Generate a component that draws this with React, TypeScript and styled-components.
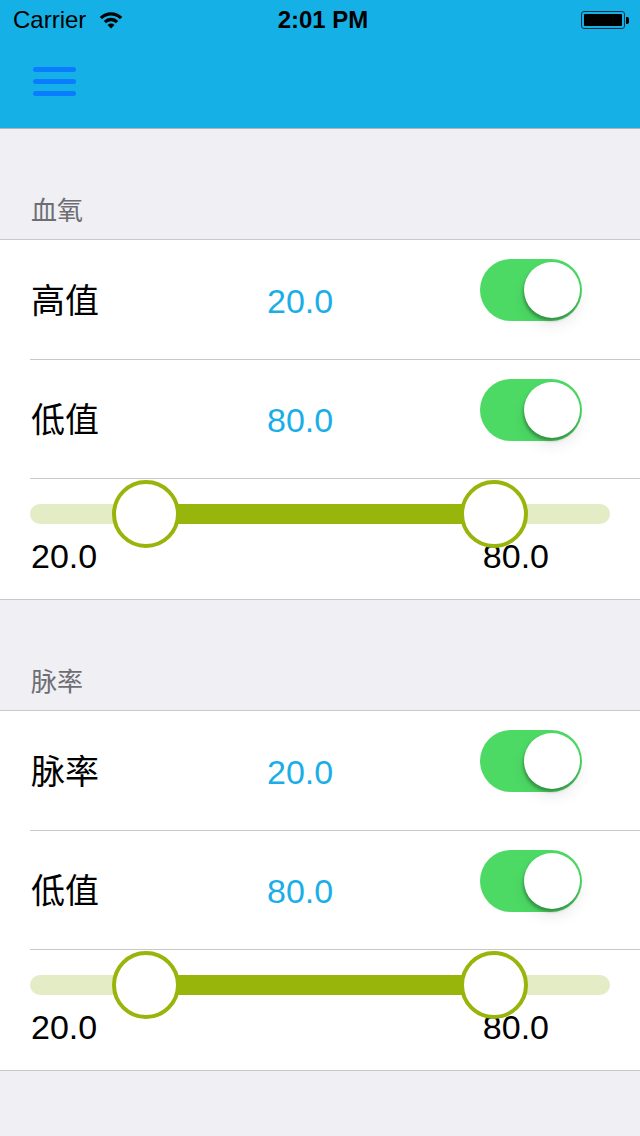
import React from 'react';
import styled, { createGlobalStyle } from 'styled-components';

const GlobalStyle = createGlobalStyle`
  html, body {
    margin: 0;
    padding: 0;
    background: #efeff4;
    font-family: "Liberation Sans", "Noto Sans CJK SC", sans-serif;
  }
`;

const Page = styled.div`
  width: 640px;
  min-height: 1136px;
  background: #efeff4;
`;

const Header = styled.div`
  height: 128px;
  background: #15b1e6;
  border-bottom: 1px solid #b4b4b4;
  display: flex;
  flex-direction: column;
`;

const StatusBar = styled.div`
  height: 40px;
  display: grid;
  grid-template-columns: 1fr auto 1fr;
  align-items: center;
  padding: 0 11px 0 13px;
  font-size: 24px;
  color: #000;
`;

const Carrier = styled.div`
  display: flex;
  align-items: center;
  gap: 13px;
`;

const Clock = styled.div`
  font-weight: bold;
  padding-left: 4px;
`;

const BatteryWrap = styled.div`
  justify-self: end;
  display: flex;
  align-items: center;
`;

const BatteryBody = styled.div`
  width: 44px;
  height: 18px;
  box-sizing: border-box;
  border: 1px solid #07344a;
  border-radius: 3px;
  padding: 2px;
  display: flex;
  & > div {
    flex: 1;
    background: #000;
    border-radius: 1px;
  }
`;

const BatteryNub = styled.div`
  width: 3px;
  height: 7px;
  background: #000;
  border-radius: 0 2px 2px 0;
  margin-left: 1px;
`;

const NavBar = styled.div`
  flex: 1;
  display: flex;
  align-items: center;
  padding: 0 0 4px 33px;
`;

const SectionTitle = styled.div`
  height: 110px;
  box-sizing: border-box;
  display: flex;
  align-items: flex-end;
  padding: 0 31px 13px;
  font-size: 26px;
  line-height: 30px;
  color: #6d6d72;
`;

const List = styled.div`
  background: #fff;
  border-top: 1px solid #c8c7cc;
  border-bottom: 1px solid #c8c7cc;
`;

const Row = styled.div`
  height: 119.5px;
  box-sizing: border-box;
  margin-left: 30px;
  border-bottom: 1px solid #c8c7cc;
  display: grid;
  grid-template-columns: 237px 1fr auto;
  align-items: center;
  padding: 3px 58px 0 0;
  font-size: 34px;
  line-height: 40px;
`;

const Label = styled.div`
  color: #000;
  padding-left: 1px;
`;

const Value = styled.div`
  color: #1aaee8;
`;

const Switch = styled.div<{ on?: boolean }>`
  align-self: start;
  margin-top: 16px;
  width: 102px;
  height: 62px;
  box-sizing: border-box;
  border-radius: 31px;
  padding: 3px 2px 3px 3px;
  background: ${(p) => (p.on ? '#4cd964' : '#e5e5ea')};
  display: flex;
  justify-content: ${(p) => (p.on ? 'flex-end' : 'flex-start')};
`;

const Knob = styled.div`
  width: 56px;
  height: 56px;
  border-radius: 50%;
  background: #fff;
  box-shadow: -1px 3px 3px rgba(0, 0, 0, 0.28), 0 8px 14px rgba(0, 0, 0, 0.08);
`;

const SliderRow = styled.div`
  height: 120px;
  box-sizing: border-box;
  padding: 25px 30px 0;
`;

const Track = styled.div`
  position: relative;
  height: 20px;
  border-radius: 10px;
  background: #e4ecc6;
`;

const Fill = styled.div`
  position: absolute;
  top: 0;
  bottom: 0;
  background: #97b50a;
`;

const Thumb = styled.div`
  position: absolute;
  top: 50%;
  width: 68px;
  height: 68px;
  box-sizing: border-box;
  border: 4px solid #97b50a;
  border-radius: 50%;
  background: #fff;
  transform: translate(-50%, -50%);
`;

const Ticks = styled.div`
  display: flex;
  margin-top: 12px;
  font-size: 34px;
  line-height: 40px;
  color: #000;
`;

const Tick = styled.div<{ end?: boolean }>`
  padding-left: 1px;
  ${(p) => (p.end ? 'margin-left: auto; margin-right: 61px;' : '')}
`;

const WifiIcon = () => (
  <svg width="24" height="18" viewBox="0 0 24 18">
    <path d="M1.9 7.1 A14.3 14.3 0 0 1 22.1 7.1" fill="none" stroke="#000" strokeWidth="3.4" />
    <path d="M5.9 11.1 A8.6 8.6 0 0 1 18.1 11.1" fill="none" stroke="#000" strokeWidth="3.4" />
    <path d="M12 17.5 L8.5 14 A5 5 0 0 1 15.5 14 Z" fill="#000" />
  </svg>
);

const MenuIcon = () => (
  <svg width="43" height="30" viewBox="0 0 43 30">
    <rect x="0" y="0" width="43" height="5" rx="2.5" fill="#0a7cff" />
    <rect x="0" y="12" width="43" height="5" rx="2.5" fill="#0a7cff" />
    <rect x="0" y="24" width="43" height="5" rx="2.5" fill="#0a7cff" />
  </svg>
);

type Section = {
  title: string;
  rows: { label: string; value: number; on: boolean }[];
  low: number;
  high: number;
};

const sections: Section[] = [
  {
    title: '血氧',
    rows: [
      { label: '高值', value: 20, on: true },
      { label: '低值', value: 80, on: true },
    ],
    low: 20,
    high: 80,
  },
  {
    title: '脉率',
    rows: [
      { label: '脉率', value: 20, on: true },
      { label: '低值', value: 80, on: true },
    ],
    low: 20,
    high: 80,
  },
];

const RangeSlider = ({ low, high }: { low: number; high: number }) => (
  <SliderRow>
    <Track>
      <Fill style={{ left: `${low}%`, width: `${high - low}%` }} />
      <Thumb style={{ left: `${low}%` }} />
      <Thumb style={{ left: `${high}%` }} />
    </Track>
    <Ticks>
      <Tick>{low.toFixed(1)}</Tick>
      <Tick end>{high.toFixed(1)}</Tick>
    </Ticks>
  </SliderRow>
);

const App = () => {
  return (
    <Page>
      <GlobalStyle />
      <Header>
        <StatusBar>
          <Carrier>
            Carrier
            <WifiIcon />
          </Carrier>
          <Clock>2:01 PM</Clock>
          <BatteryWrap>
            <BatteryBody>
              <div />
            </BatteryBody>
            <BatteryNub />
          </BatteryWrap>
        </StatusBar>
        <NavBar>
          <MenuIcon />
        </NavBar>
      </Header>

      {sections.map((s) => (
        <div key={s.title}>
          <SectionTitle>{s.title}</SectionTitle>
          <List>
            {s.rows.map((r, i) => (
              <Row key={i}>
                <Label>{r.label}</Label>
                <Value>{r.value.toFixed(1)}</Value>
                <Switch on={r.on}>
                  <Knob />
                </Switch>
              </Row>
            ))}
            <RangeSlider low={s.low} high={s.high} />
          </List>
        </div>
      ))}
    </Page>
  );
};

export default App;
